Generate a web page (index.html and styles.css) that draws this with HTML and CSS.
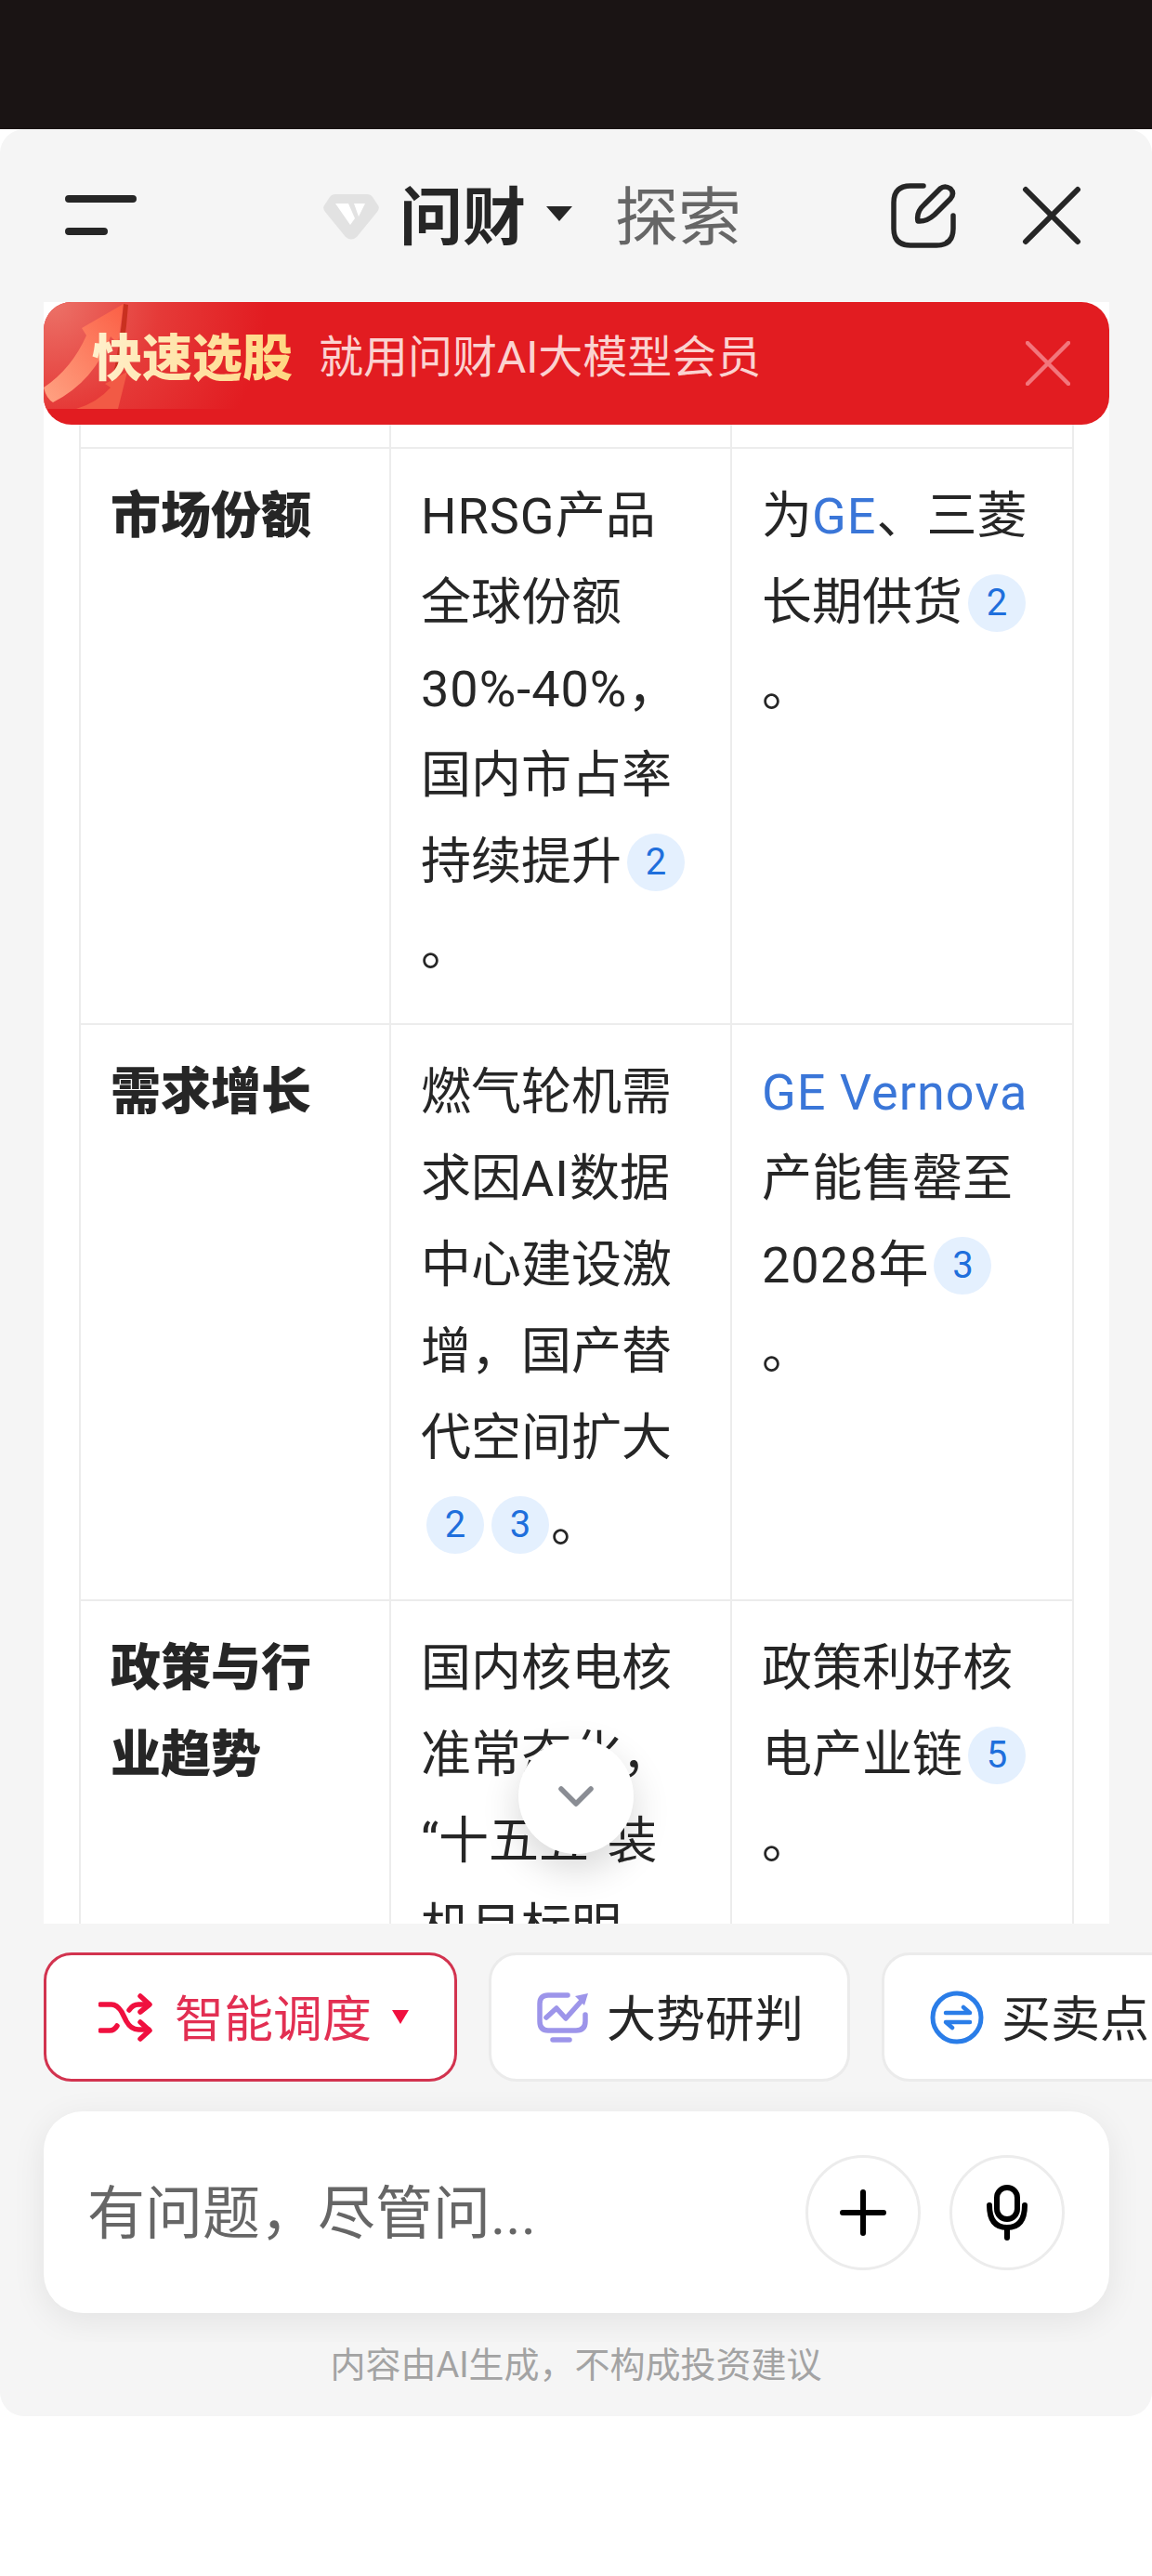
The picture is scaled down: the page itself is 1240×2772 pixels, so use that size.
FILE: index.html
```html
<!DOCTYPE html>
<html lang="zh-CN">
<head>
<meta charset="UTF-8" />
<meta name="viewport" content="width=device-width, initial-scale=1" />
<title>问财</title>
<link rel="stylesheet" href="styles.css">
</head>
<body>
  <div class="top-strip"></div>

  <div class="sheet">
    <header class="sheet-header">
      <button class="icon-btn menu-btn" aria-label="菜单">
        <svg width="80" height="46" viewBox="0 0 80 46"><path d="M4 5H73M4 40H42" fill="none" stroke="#262626" stroke-width="8" stroke-linecap="round"/></svg>
      </button>
      <div class="title-group">
        <svg class="logo" width="60" height="51" viewBox="0 0 60 51">
          <path d="M13 1H47Q51 1 53 4L59 13Q61 16 58 20L36 47Q30 52 24 47L2 20Q-1 16 1 13L7 4Q9 1 13 1Z" fill="#e2e2e2"/>
          <path d="M13 11H27L34 27L29 34ZM33 11H45L38 25Z" fill="#fff"/>
        </svg>
        <span class="title-main">问财</span>
        <span class="title-caret"></span>
        <span class="title-sub">探索</span>
      </div>
      <button class="icon-btn edit-btn" aria-label="新建">
        <svg width="70" height="70" viewBox="0 0 70 70" fill="none" stroke="#262626" stroke-width="5.5" stroke-linecap="round" stroke-linejoin="round">
          <path d="M35 3H21Q3 3 3 21V49Q3 67 21 67H49Q67 67 67 49V35"/>
          <path d="M29 41Q27 31 36 23L53 6Q58 2 64 6Q69 11 64 17L47 34Q38 42 29 41Z"/>
        </svg>
      </button>
      <button class="icon-btn close-btn" aria-label="关闭">
        <svg width="64" height="64" viewBox="0 0 64 64"><path d="M4 4L60 60M60 4L4 60" fill="none" stroke="#262626" stroke-width="6" stroke-linecap="round"/></svg>
      </button>
    </header>

    <main class="content">
      <div class="promo">
        <svg class="promo-arrow" width="260" height="115" viewBox="0 0 260 115">
          <defs>
            <radialGradient id="promoGlow" gradientUnits="userSpaceOnUse" cx="10" cy="0" r="230">
              <stop offset="0" stop-color="#ec7268"/>
              <stop offset="0.5" stop-color="#e53a38"/>
              <stop offset="1" stop-color="#e21c21"/>
            </radialGradient>
            <linearGradient id="arrowFill" x1="0" y1="1" x2="1" y2="0">
              <stop offset="0" stop-color="#ffa383"/>
              <stop offset="1" stop-color="#fb5f45"/>
            </linearGradient>
          </defs>
          <rect width="260" height="115" fill="url(#promoGlow)"/>
          <path d="M0 92Q30 72 46 36L41 28L86 2L80 45L72 37Q55 85 10 108Q3 104 0 92Z" fill="url(#arrowFill)"/>
          <path d="M86 2L91 3Q88 50 76 95L72 90Q82 50 86 2Z" fill="#c9301f"/>
          <path d="M35 115Q58 108 72 92L66 88L90 75L80 115Z" fill="#f25a45"/>
        </svg>
        <span class="promo-title">快速选股</span>
        <span class="promo-text">就用问财AI大模型会员</span>
        <svg class="promo-close" width="48" height="48" viewBox="0 0 48 48"><path d="M2 2L46 46M46 2L2 46" fill="none" stroke="#f2767c" stroke-width="4.5" stroke-linecap="round"/></svg>
      </div>

      <table class="data-table">
        <tr class="stub-row"><td></td><td></td><td></td></tr>
        <tr>
          <td class="row-head">市场份额</td>
          <td><span class="latin">HRSG</span>产品全球份额<span class="latin">30%-40%</span>，国内市占率持续提升<span class="cite">2</span>。</td>
          <td>为<a class="link">GE</a>、三菱长期供货<span class="cite">2</span>。</td>
        </tr>
        <tr>
          <td class="row-head">需求增长</td>
          <td>燃气轮机需求因<span class="latin">AI</span>数据中心建设激增，国产替代空间扩大<span class="cite">2</span><span class="cite">3</span>。</td>
          <td><a class="link">GE Vernova</a>产能售罄至<span class="latin">2028</span>年<span class="cite">3</span>。</td>
        </tr>
        <tr>
          <td class="row-head">政策与行业趋势</td>
          <td>国内核电核准常态化，“十五五”装机目标明<br>确。</td>
          <td>政策利好核电产业链<span class="cite">5</span>。</td>
        </tr>
      </table>

      <button class="scroll-down" aria-label="向下">
        <svg width="40" height="24" viewBox="0 0 40 24"><path d="M4 4L20 20L36 4" fill="none" stroke="#8a8d94" stroke-width="5.5" stroke-linecap="round" stroke-linejoin="round"/></svg>
      </button>
    </main>

    <nav class="chips">
      <button class="chip chip-active">
        <svg width="58" height="52" viewBox="0 0 58 52" fill="none" stroke="#f0103f" stroke-width="5.5" stroke-linecap="round" stroke-linejoin="round">
          <path d="M2 12H14Q20 12 25 20L30 30Q35 39 43 39H54"/>
          <path d="M2 40H12Q17 40 20 35M33 18Q37 12 43 12H54"/>
          <path d="M45 3L55 12L45 20M45 31L55 40L45 49"/>
        </svg>
        <span class="chip-label">智能调度</span>
        <span class="chip-caret"></span>
      </button>
      <button class="chip">
        <svg width="56" height="54" viewBox="0 0 56 54" fill="none" stroke="#9d95ea" stroke-width="5.5" stroke-linecap="round" stroke-linejoin="round">
          <path d="M33 3H12Q3 3 3 12V31Q3 41 12 41H42Q52 41 52 31V24"/>
          <path d="M17 51H35"/>
          <path d="M10 27L21 17L31 28L48 9"/>
          <path d="M55 1L41 4L51 14Z" fill="#9d95ea" stroke="none"/>
        </svg>
        <span class="chip-label">大势研判</span>
      </button>
      <button class="chip">
        <svg width="58" height="58" viewBox="0 0 58 58" fill="none" stroke="#2a7de8" stroke-width="5">
          <circle cx="29" cy="29" r="26"/>
          <path d="M17 24H43L36 18M43 34H17L24 40" stroke-width="4.5" stroke-linecap="round" stroke-linejoin="round"/>
        </svg>
        <span class="chip-label">买卖点</span>
      </button>
    </nav>

    <footer class="composer-area">
      <div class="composer-wrap">
        <div class="composer">
          <span class="placeholder">有问题，尽管问...</span>
          <button class="round-btn" aria-label="添加">
            <svg width="50" height="50" viewBox="0 0 50 50"><path d="M25 3V47M3 25H47" fill="none" stroke="#000" stroke-width="6" stroke-linecap="round"/></svg>
          </button>
          <button class="round-btn" aria-label="语音">
            <svg width="46" height="60" viewBox="0 0 46 60" fill="none" stroke="#000" stroke-width="6" stroke-linecap="round">
              <rect x="12" y="3" width="22" height="34" rx="11"/>
              <path d="M4 22Q4 46 23 46Q42 46 42 22M23 46V57"/>
            </svg>
          </button>
        </div>
      </div>
      <p class="disclaimer">内容由AI生成，不构成投资建议</p>
    </footer>
  </div>
</body>
</html>
```

FILE: styles.css
```css
/* Reset and base */
* {
  box-sizing: border-box;
}
html, body {
  height: 100%;
}
body {
  margin: 0;
  background-color: #fff;
  font-family: Roboto, "Noto Sans CJK SC", sans-serif;
  color: #262626;
  overflow: hidden;
}
button {
  font-family: inherit;
  padding: 0;
  border: none;
  background: none;
}
.top-strip {
  height: 139px;
  background-color: #1a1414;
}
/* Bottom sheet */
.sheet {
  height: 2461px;
  background-color: #f5f5f5;
  border-radius: 26px;
  overflow: hidden;
  display: flex;
  flex-direction: column;
}
.sheet-header {
  height: 186px;
  flex: none;
  display: flex;
  align-items: center;
  padding: 0 76px 0 70px;
}
.icon-btn {
  display: flex;
}
.title-group {
  display: flex;
  align-items: center;
  margin-left: 198px;
}
.logo {
  margin-top: 3px;
}
.title-main {
  font-size: 68px;
  font-weight: 700;
  margin: -8px 0 0 22px;
}
.title-caret {
  width: 0;
  height: 0;
  margin: -4px 0 0 22px;
  border-left: 14px solid transparent;
  border-right: 14px solid transparent;
  border-top: 16px solid #262626;
}
.title-sub {
  font-size: 68px;
  color: #666;
  margin: -8px 0 0 46px;
}
.edit-btn {
  margin-left: auto;
}
.close-btn {
  margin-left: 71px;
}
/* Scrolling answer area */
.content {
  height: 1745px;
  flex: none;
  margin: 0 46px 0 47px;
  padding: 0 38px;
  background-color: #fff;
  position: relative;
  overflow: hidden;
}
.promo {
  position: absolute;
  left: 0;
  top: 0;
  width: 100%;
  height: 132px;
  background-color: #e21c21;
  border-radius: 30px;
  overflow: hidden;
  display: flex;
  align-items: center;
  z-index: 2;
}
.promo-arrow {
  position: absolute;
  left: 0;
  top: 0;
}
.promo-title {
  position: relative;
  margin-left: 52px;
  margin-top: -20px;
  font-size: 54px;
  font-weight: 900;
  background: linear-gradient(90deg, #fff0cc, #ffd680);
  -webkit-background-clip: text;
  background-clip: text;
  color: transparent;
}
.promo-text {
  position: relative;
  margin-left: 28px;
  margin-top: -22px;
  font-size: 48px;
  color: #fbd2d0;
}
.promo-close {
  margin-left: auto;
  margin-right: 42px;
}
/* Table */
.data-table {
  width: 1071px;
  table-layout: fixed;
  border-collapse: collapse;
  font-size: 54px;
  line-height: 93px;
}
.data-table td {
  border: 2px solid #ececec;
  padding: 26px 34px 34px 32px;
  vertical-align: top;
}
.data-table td:nth-child(1) {
  width: 334px;
}
.data-table td:nth-child(2) {
  width: 367px;
}
.data-table .stub-row td {
  height: 156px;
  padding: 0;
}
.row-head {
  font-weight: 900;
}
.link {
  color: #3a76d8;
  letter-spacing: 1px;
}
.latin {
  letter-spacing: 1px;
}
.cite {
  display: inline-block;
  width: 62px;
  height: 62px;
  margin-left: 6px;
  margin-right: 2px;
  border-radius: 50%;
  background-color: #e4f0fe;
  color: #1f6fdc;
  font-size: 40px;
  line-height: 62px;
  text-align: center;
  vertical-align: 5px;
}
.scroll-down {
  position: absolute;
  left: 511px;
  top: 1546px;
  width: 124px;
  height: 124px;
  border-radius: 50%;
  background-color: #fff;
  box-shadow: 0 16px 40px rgba(0, 0, 0, 0.16);
  display: flex;
  align-items: center;
  justify-content: center;
  z-index: 1;
}
/* Quick action chips */
.chips {
  flex: none;
  height: 139px;
  margin-top: 31px;
  padding-left: 47px;
  display: flex;
  gap: 34px;
  overflow: hidden;
}
.chip {
  flex: none;
  height: 139px;
  padding: 0 47px 0 49px;
  display: flex;
  align-items: center;
  gap: 19px;
  border: 3px solid #ebebeb;
  border-radius: 30px;
  background-color: #fff;
  color: #262626;
  font-size: 53px;
}
.chip-label {
  margin-top: -4px;
}
.chip-active {
  padding: 0 49px 0 56px;
  border-color: #d2334f;
  color: #e22f52;
  gap: 24px;
}
.chip-caret {
  width: 0;
  height: 0;
  margin-left: -2px;
  border-left: 9px solid transparent;
  border-right: 9px solid transparent;
  border-top: 15px solid #f0103f;
}
/* Composer */
.composer-area {
  flex: 1;
}
.composer-wrap {
  height: 280px;
  padding: 32px 46px 0 47px;
  overflow: hidden;
}
.composer {
  height: 217px;
  padding: 0 48px 0 47px;
  display: flex;
  align-items: center;
  gap: 31px;
  background-color: #fff;
  border-radius: 42px;
  box-shadow: 0 8px 36px rgba(0, 0, 0, 0.08);
}
.placeholder {
  flex: 1;
  margin-top: -8px;
  font-size: 62px;
  color: #666;
}
.round-btn {
  width: 124px;
  height: 124px;
  border: 3px solid #ececec;
  border-radius: 50%;
  background-color: #fff;
  display: flex;
  align-items: center;
  justify-content: center;
}
.disclaimer {
  margin: 0;
  text-align: center;
  font-size: 38px;
  line-height: 50px;
  color: #a3a3a3;
}
```
